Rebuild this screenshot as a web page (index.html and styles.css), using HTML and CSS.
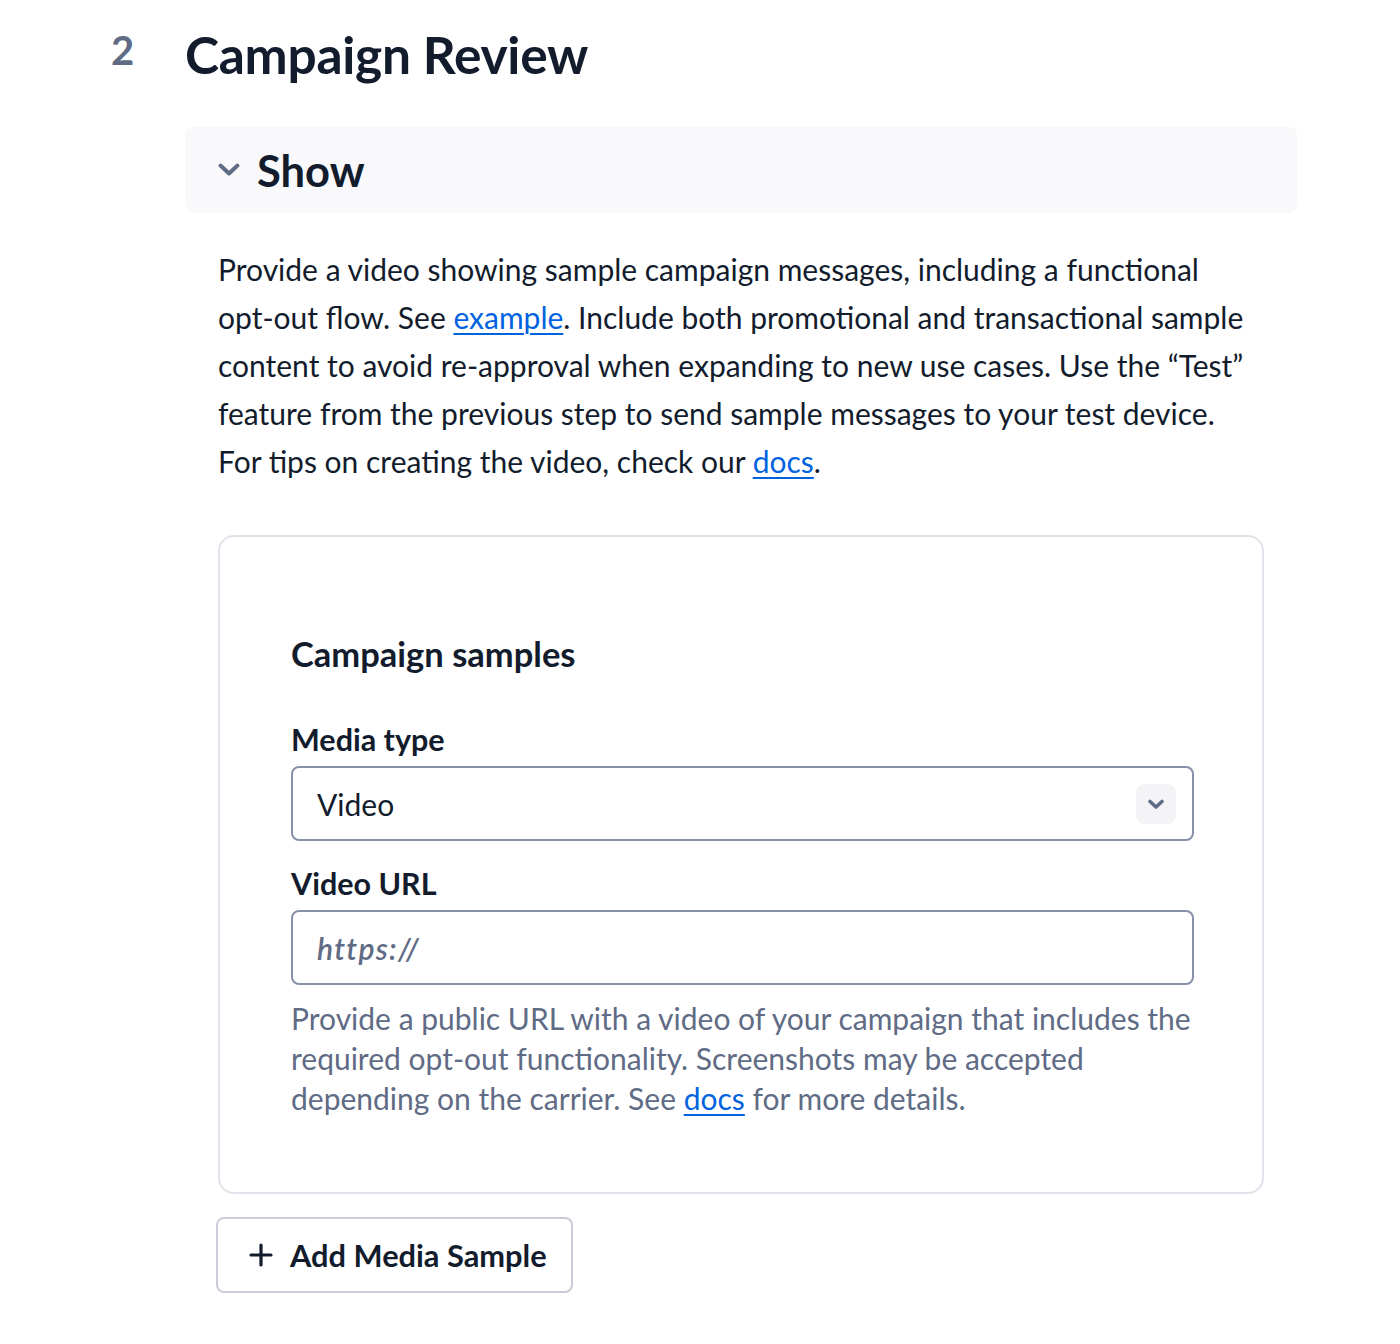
FILE: index.html
```html
<!DOCTYPE html>
<html>
<head>
<meta charset="utf-8">
<link rel="stylesheet" href="styles.css">
</head>
<body>
<div class="page">
  <div class="step">
    <div class="step-num">2</div>
    <div class="step-body">
      <h1 class="title">Campaign Review</h1>
      <div class="disclosure">
        <svg class="chev" width="24" height="24" viewBox="0 0 24 24"><path d="M3.5 7.5l8.5 8 8.5-8" fill="none" stroke="#606b85" stroke-width="4" stroke-linecap="round" stroke-linejoin="round"/></svg>
        <span class="show">Show</span>
      </div>
      <div class="content">
        <p class="intro">Provide a video showing sample campaign messages, including a functional opt-out flow. See <a href="#">example</a>. Include both promotional and transactional sample content to avoid re-approval when expanding to new use cases. Use the “Test” feature from the previous step to send sample messages to your test device. For tips on creating the video, check our <a href="#">docs</a>.</p>
        <div class="card">
          <h2 class="card-title">Campaign samples</h2>
          <div class="field">
            <label class="label">Media type</label>
            <div class="select">
              <span>Video</span>
              <span class="select-btn"><svg width="22" height="22" viewBox="0 0 22 22"><path d="M5 8.5l6 5.5 6-5.5" fill="none" stroke="#606b85" stroke-width="3.6" stroke-linecap="round" stroke-linejoin="round"/></svg></span>
            </div>
          </div>
          <div class="field field-url">
            <label class="label">Video URL</label>
            <div class="input"><span class="placeholder">https://</span></div>
            <p class="help">Provide a public URL with a video of your campaign that includes the required opt-out functionality. Screenshots may be accepted depending on the carrier. See <a href="#">docs</a> for more details.</p>
          </div>
        </div>
        <button class="add-btn"><svg width="26" height="26" viewBox="0 0 26 26"><path d="M13 3v20M3 13h20" stroke="#121c2d" stroke-width="3.2" stroke-linecap="round"/></svg><span>Add Media Sample</span></button>
      </div>
    </div>
  </div>
</div>
</body>
</html>
```
FILE: styles.css
```css
* { box-sizing: border-box; }
body {
  margin: 0;
  background: #ffffff;
  font-family: Lato, "Noto Sans", sans-serif;
  color: #121c2d;
}
.page {
  padding: 24px 0 0 0;
}
.step {
  display: flex;
}
.step-num {
  width: 185px;
  padding-left: 111px;
  font-size: 40px;
  font-weight: 700;
  color: #606b85;
  line-height: 52px;
}
.step-body {
  width: 1112px;
}
.title {
  margin: 0;
  font-size: 51.5px;
  font-weight: 700;
  line-height: 60px;
  letter-spacing: -0.3px;
}
.disclosure {
  margin-top: 43px;
  height: 86px;
  background: #f9f9fb;
  border-radius: 8px;
  display: flex;
  align-items: center;
  padding-left: 32px;
  gap: 16px;
}
.chev { flex: none; }
.show {
  font-size: 43.5px;
  font-weight: 700;
}
.content {
  padding: 0 33px;
}
.intro {
  margin: 32px 0 0 0;
  font-size: 30px;
  line-height: 48px;
  width: 1035px;
}
a { color: #0263e0; text-decoration: underline; text-underline-offset: 4px; text-decoration-thickness: 2px; }
.card {
  margin-top: 50px;
  border: 2px solid #e1e3ea;
  border-radius: 16px;
  width: 1046px;
  padding: 93px 71px 74px 71px;
}
.card-title {
  margin: 0 0 24px 0;
  font-size: 34.5px;
  font-weight: 700;
  line-height: 48px;
}
.field { margin-top: 43px; }
.field-url { margin-top: 24px; }
.label {
  display: block;
  font-size: 30.5px;
  font-weight: 700;
  line-height: 36px;
  margin-bottom: 9px;
}
.select, .input {
  width: 903px;
  height: 75px;
  border: 2px solid #8891aa;
  border-radius: 8px;
  display: flex;
  align-items: center;
  padding: 0 16px 0 24px;
  font-size: 30px;
}
.select { justify-content: space-between; }
.select-btn {
  width: 40px;
  height: 40px;
  border-radius: 8px;
  background: #f4f4f6;
  display: flex;
  align-items: center;
  justify-content: center;
}
.placeholder {
  font-style: italic;
  font-weight: 600;
  color: #606b85;
  letter-spacing: 1.3px;
}
.help {
  margin: 13px 0 0 0;
  font-size: 30px;
  line-height: 40px;
  color: #606b85;
  width: 903px;
}
.add-btn {
  margin-top: 23px;
  margin-left: -2px;
  height: 76px;
  padding: 0 24px 0 30px;
  border: 2px solid #cacdd8;
  border-radius: 8px;
  background: #fff;
  display: flex;
  align-items: center;
  gap: 16px;
  font-family: inherit;
  font-size: 30.8px;
  font-weight: 700;
  color: #121c2d;
}
```
